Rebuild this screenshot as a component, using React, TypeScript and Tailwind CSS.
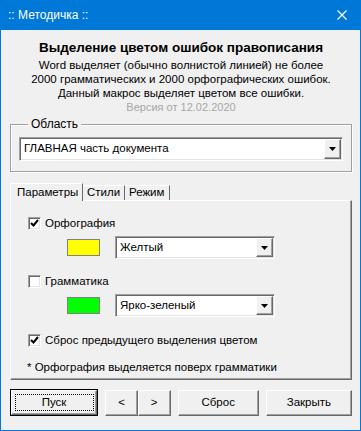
import React from "react";

const font = { fontFamily: '"Liberation Sans", Arial, sans-serif' };

const sunken =
  "border border-t-[#a0a0a0] border-l-[#a0a0a0] border-b-white border-r-white shadow-[inset_1px_1px_0_#696969,inset_-1px_-1px_0_#e3e3e3]";
const raised =
  "border border-t-white border-l-white border-b-[#696969] border-r-[#696969] shadow-[inset_-1px_-1px_0_#a0a0a0]";

function Arrow() {
  return (
    <svg width="7" height="4" viewBox="0 0 7 4">
      <path d="M0 0h7L3.5 4z" fill="#000" />
    </svg>
  );
}

function Combo({ value, className }: { value: string; className: string }) {
  return (
    <div className={`flex items-stretch bg-white ${sunken} ${className}`}>
      <span className="flex-1 flex items-center pl-[4px] text-[11.5px] text-black">{value}</span>
      <span className={`w-[17px] my-[1px] mr-[1px] flex items-center justify-center bg-[#f0f0f0] ${raised} shadow-[inset_-1px_-1px_0_#a0a0a0,inset_1px_1px_0_#e3e3e3]`}>
        <Arrow />
      </span>
    </div>
  );
}

function Check({ checked, label, className }: { checked: boolean; label: string; className?: string }) {
  return (
    <div className={`flex items-center gap-[4px] ${className ?? ""}`}>
      <span className={`w-[13px] h-[13px] bg-white flex items-center justify-center ${sunken}`}>
        {checked && (
          <svg width="9" height="8" viewBox="0 0 9 8">
            <path d="M1 4l2.5 2.5L8 1" stroke="#000" strokeWidth="2" fill="none" />
          </svg>
        )}
      </span>
      <span className="text-[11.5px] text-black leading-[14px]">{label}</span>
    </div>
  );
}

function Btn({ children, className }: { children: React.ReactNode; className: string }) {
  return (
    <button className={`h-[26px] bg-[#f0f0f0] text-[11.5px] text-black flex items-center justify-center ${raised} ${className}`}>
      {children}
    </button>
  );
}

export default function App() {
  return (
    <div className="w-[361px] h-[431px] flex flex-col bg-[#f0f0f0] select-none" style={font}>
      <div className="h-[30px] bg-[#0078d7] flex items-center justify-between pl-[8px] pr-[14px] text-white text-[12px] shrink-0">
        <span>:: Методичка ::</span>
        <svg width="10" height="10" viewBox="0 0 10 10">
          <path d="M0.5 0.5l9 9M9.5 0.5l-9 9" stroke="#fff" strokeWidth="1.2" />
        </svg>
      </div>

      <div className="flex-1 flex flex-col border-x border-b border-[#0078d7] px-[8px] pl-[9px]">
        <div className="pt-[10px] text-center text-black">
          <div className="text-[13.5px] font-bold leading-[16px]">Выделение цветом ошибок правописания</div>
          <div className="mt-[2px] text-[11.5px] leading-[14px]">
            Word выделяет (обычно волнистой линией) не более
            <br />
            2000 грамматических и 2000 орфографических ошибок.
            <br />
            Данный макрос выделяет цветом все ошибки.
          </div>
          <div className="text-[11px] leading-[14px] text-[#a6a6a6]">Версия от 12.02.2020</div>
        </div>

        <fieldset className="mt-[3px] border border-[#a0a0a0] shadow-[inset_1px_1px_0_#fff,1px_1px_0_#fff] px-[8px] pt-[6px] pb-[10px]">
          <legend className="ml-[9px] px-[3px] text-[12px] leading-[14px] text-black">Область</legend>
          <Combo value="ГЛАВНАЯ часть документа" className="h-[24px]" />
        </fieldset>

        <div className="mt-[10px] flex items-end h-[18px]">
          <div className="h-[18px] pl-[6px] flex items-center border-t border-l border-white border-r border-r-[#696969] text-[11.5px] text-black bg-[#f0f0f0] relative top-[1px] w-[73px]">
            Параметры
          </div>
          <div className="h-[15px] pl-[4px] flex items-center border-t border-white border-r border-r-[#696969] text-[11.5px] text-black w-[42px]">
            Стили
          </div>
          <div className="h-[15px] pl-[4px] flex items-center border-t border-white border-r border-r-[#696969] text-[11.5px] text-black w-[45px]">
            Режим
          </div>
        </div>

        <div className="h-[180px] border border-t-white border-l-white border-b-[#696969] border-r-[#696969] shadow-[inset_-1px_-1px_0_#a0a0a0] pl-[17px] pt-[15px] flex flex-col">
          <Check checked label="Орфография" />
          <div className="mt-[6px] flex items-center">
            <span className="ml-[39px] w-[33px] h-[17px] bg-[#ffff00] border border-[#808080]" />
            <Combo value="Желтый" className="ml-[15px] w-[160px] h-[23px]" />
          </div>
          <Check checked={false} label="Грамматика" className="mt-[15px]" />
          <div className="mt-[6px] flex items-center">
            <span className="ml-[39px] w-[33px] h-[17px] bg-[#00ff00] border border-[#808080]" />
            <Combo value="Ярко-зеленый" className="ml-[15px] w-[160px] h-[23px]" />
          </div>
          <Check checked label="Сброс предыдущего выделения цветом" className="mt-[16px]" />
          <div className="mt-[13px] -ml-[1px] text-[11.5px] leading-[14px] text-black">* Орфография выделяется поверх грамматики</div>
        </div>

        <div className="mt-[9px] flex items-center">
          <div className="w-[89px] h-[27px] border border-black flex">
            <Btn className="flex-1 h-full">
              <span className="w-[79px] h-[17px] border border-dotted border-black flex items-center justify-center">Пуск</span>
            </Btn>
          </div>
          <Btn className="ml-[7px] w-[33px]">&lt;</Btn>
          <Btn className="w-[33px]">&gt;</Btn>
          <Btn className="ml-[7px] w-[82px]">Сброс</Btn>
          <Btn className="ml-[7px] w-[87px]">Закрыть</Btn>
        </div>
      </div>
    </div>
  );
}
